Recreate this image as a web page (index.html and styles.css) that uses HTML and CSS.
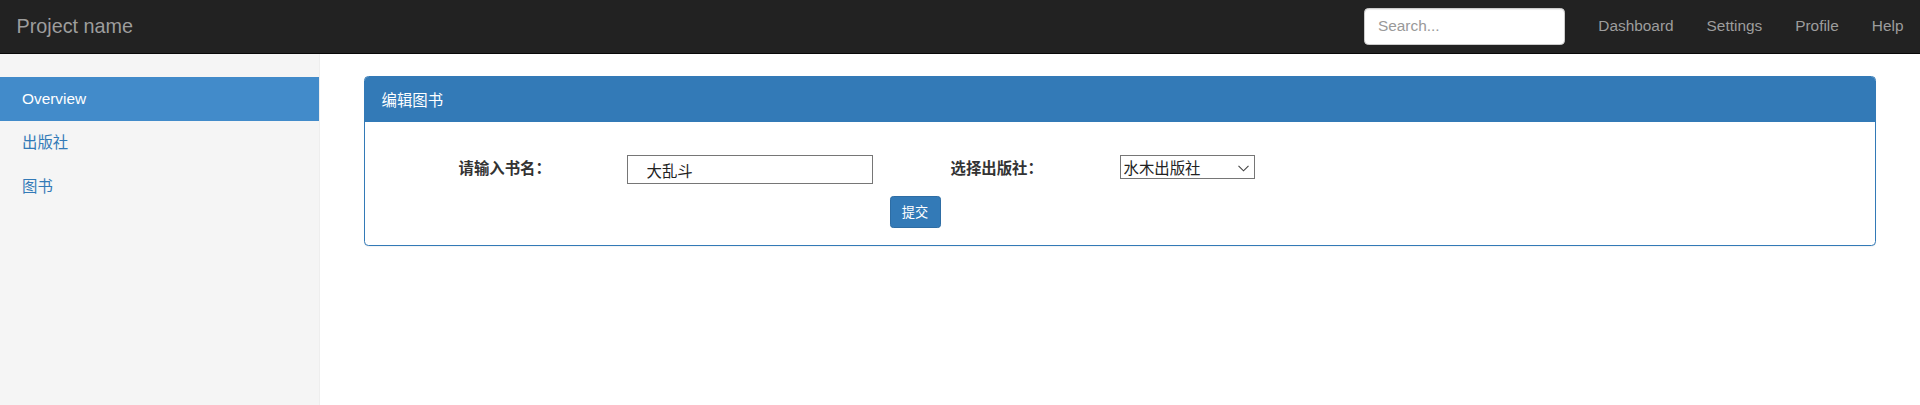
FILE: index.html
```html
<!DOCTYPE html>
<html lang="zh-CN">
<head>
<meta charset="utf-8">
<title>Project name</title>
<link rel="stylesheet" href="styles.css">
</head>
<body>
<nav class="navbar">
  <a class="brand" href="#">Project name</a>
  <div class="navbar-right">
    <form class="search-form">
      <input class="search" type="text" placeholder="Search...">
    </form>
    <ul class="top-nav">
      <li><a href="#">Dashboard</a></li>
      <li><a href="#">Settings</a></li>
      <li><a href="#">Profile</a></li>
      <li><a href="#">Help</a></li>
    </ul>
  </div>
</nav>
<div class="layout">
  <aside class="sidebar">
    <ul class="side-nav">
      <li class="active"><a href="#">Overview</a></li>
      <li><a href="#">出版社</a></li>
      <li><a href="#">图书</a></li>
    </ul>
  </aside>
  <main class="main">
    <section class="panel">
      <div class="panel-heading">编辑图书</div>
      <div class="panel-body">
        <form class="book-form">
          <div class="form-row">
            <label class="field-label label-name">请输入书名：</label>
            <input class="text-input" type="text" value="大乱斗">
            <label class="field-label label-pub">选择出版社：</label>
            <div class="select-wrap">
              <select class="select">
                <option>水木出版社</option>
              </select>
              <svg class="chevron" width="11" height="7" viewBox="0 0 11 7"><path d="M0.5 0.8 L5.5 5.8 L10.5 0.8" fill="none" stroke="#444" stroke-width="1.1"/></svg>
            </div>
          </div>
          <div class="button-row">
            <button class="btn" type="button">提交</button>
          </div>
        </form>
      </div>
    </section>
  </main>
</div>
</body>
</html>
```
FILE: styles.css
```css
* { box-sizing: border-box; }
html, body { margin: 0; padding: 0; }
body {
  font-family: "Liberation Sans", Arial, "Noto Sans CJK SC", sans-serif;
  font-size: 15.4px;
  line-height: 22px;
  color: #333;
  background: #fff;
  height: 405px;
  overflow: hidden;
}
a { text-decoration: none; }
ul { list-style: none; margin: 0; padding: 0; }

.navbar {
  height: 54px;
  background: #222;
  border-bottom: 1px solid #080808;
  display: flex;
  align-items: center;
  justify-content: space-between;
}
.brand {
  color: #9d9d9d;
  font-size: 19.8px;
  line-height: 22px;
  padding: 0 16.5px;
  margin-top: -1px;
}
.navbar-right { display: flex; align-items: center; height: 100%; }
.search-form { margin: 0 17px 0 0; display: flex; align-items: center; }
.search {
  width: 201px;
  height: 37px;
  margin-top: -1px;
  border: 1px solid #ccc;
  border-radius: 4.4px;
  padding: 0 13.2px;
  font-family: "Liberation Sans", Arial, sans-serif;
  font-size: 15.4px;
  color: #555;
  background: #fff;
  box-shadow: inset 0 1px 1px rgba(0,0,0,.075);
  outline: none;
}
.search::placeholder { color: #999; }
.top-nav { display: flex; }
.top-nav a {
  display: block;
  color: #9d9d9d;
  padding: 0 16.5px;
  line-height: 22px;
  margin-top: -1px;
}

.layout { display: flex; height: 351px; }
.sidebar {
  width: 320px;
  flex: none;
  background: #f5f5f5;
  border-right: 1px solid #eee;
  padding-top: 23px;
}
.side-nav a {
  display: block;
  padding: 11px 22px;
  line-height: 22px;
  color: #337ab7;
}
.side-nav .active a { background: #428bca; color: #fff; }

.main { flex: 1; padding: 22px 44px 0 44px; }
.panel {
  border: 1px solid #337ab7;
  border-radius: 4.4px;
  box-shadow: 0 1px 1px rgba(0,0,0,.05);
  background: #fff;
}
.panel-heading {
  background: #337ab7;
  color: #fff;
  padding: 11px 16.5px;
  line-height: 22px;
  height: 45px;
  border-bottom: 1px solid #337ab7;
  border-radius: 3.4px 3.4px 0 0;
  font-family: "Noto Sans CJK SC", sans-serif;
  font-size: 15.4px;
}
.panel-body { padding: 33px 16.5px 17px 16.5px; }

.form-row { display: flex; align-items: flex-start; padding-left: 77px; }
.field-label {
  font-weight: bold;
  font-family: "Noto Sans CJK SC", sans-serif;
  font-size: 15.4px;
  line-height: 24px;
  color: #333;
}
.label-name { width: 168px; }
.label-pub { width: 169px; margin-left: 78px; }
.text-input {
  width: 246px;
  height: 29px;
  border: 1px solid #767676;
  border-radius: 0;
  padding: 0 0 0 19px;
  font-family: "Noto Sans CJK SC", sans-serif;
  font-size: 15.4px;
  color: #222;
  background: #fff;
  outline: none;
}
.select-wrap { position: relative; width: 135px; height: 24px; }
.select {
  -webkit-appearance: none;
  appearance: none;
  width: 135px;
  height: 24px;
  border: 1px solid #767676;
  border-radius: 0;
  padding: 0 0 0 3px;
  font-family: "Noto Sans CJK SC", sans-serif;
  font-size: 15.4px;
  color: #222;
  background: #fff;
  outline: none;
}
.chevron { position: absolute; right: 6px; top: 10px; pointer-events: none; }

.button-row { display: flex; padding-left: 508px; margin-top: 12px; }
.btn {
  width: 51px;
  height: 32px;
  background: #337ab7;
  border: 1px solid #2e6da4;
  border-radius: 3.3px;
  color: #fff;
  font-family: "Noto Sans CJK SC", sans-serif;
  font-size: 13.2px;
  line-height: 18px;
  padding: 0;
}
```
